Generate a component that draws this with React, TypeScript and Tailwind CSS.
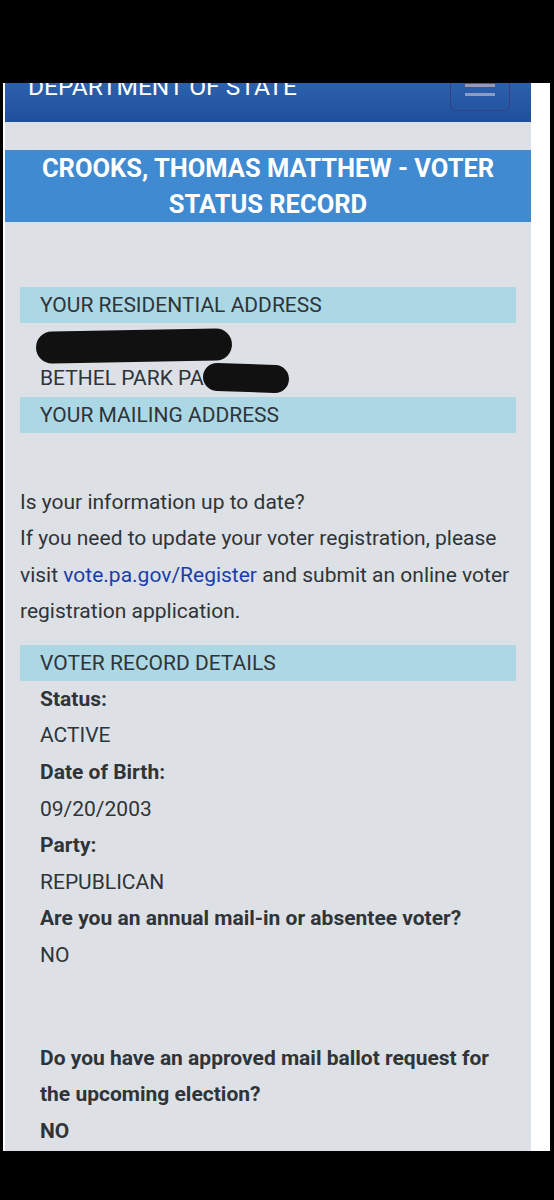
import React from 'react';

const DETAILS = [
  { label: 'Status:', value: 'ACTIVE' },
  { label: 'Date of Birth:', value: '09/20/2003' },
  { label: 'Party:', value: 'REPUBLICAN' },
  { label: 'Are you an annual mail-in or absentee voter?', value: 'NO' },
];

function SectionBar({ children }: { children: React.ReactNode }) {
  return (
    <div className="mx-[15px] h-[36px] bg-[#acd8e6] pl-[20px] text-[21px] leading-[36px] text-[#2f3438]">
      {children}
    </div>
  );
}

// marker scribble that hides part of the address
function Redaction({ w, h, tilt }: { w: number; h: number; tilt: string }) {
  return (
    <svg width={w} height={h} viewBox={`0 0 ${w} ${h}`} className={`inline-block align-middle ${tilt}`}>
      <rect x="1" y="1" width={w - 2} height={h - 2} rx={(h - 2) / 2} fill="#111" />
    </svg>
  );
}

export default function App() {
  return (
    <div className="h-[1200px] w-[554px] overflow-hidden bg-black pt-[83px] font-['Roboto','Liberation_Sans',sans-serif]">
      <div className="ml-[3px] mr-[4px] bg-white pl-[2px] pr-[19px]">
        <div className="h-[1068px] overflow-hidden bg-[#dde1e6]">
          {/* Header */}
          <header className="flex h-[39px] items-start justify-between overflow-hidden bg-gradient-to-b from-[#2c61ae] to-[#1f4f9b] pl-[23px] pr-[21px]">
            <span className="-mt-[8px] text-[24.5px] leading-[24px] text-white">DEPARTMENT OF STATE</span>
            <button className="-mt-[10px] flex h-[38px] w-[60px] flex-col items-center justify-end gap-[6px] rounded-[6px] border-[1.5px] border-[#3b3c85] pb-[14px]">
              <span className="h-[3px] w-[30px] bg-[#8e9cc2]" />
              <span className="h-[3px] w-[30px] bg-[#8e9cc2]" />
              <span className="h-[3px] w-[30px] bg-[#8e9cc2]" />
            </button>
          </header>

          {/* Title */}
          <div className="mt-[28px] bg-[#3f8ad0] text-center text-[25.5px] font-bold leading-[36px] text-white">
            CROOKS, THOMAS MATTHEW - VOTER
            <br />
            STATUS RECORD
          </div>

          <div className="mt-[65px]">
            <SectionBar>YOUR RESIDENTIAL ADDRESS</SectionBar>
            <div className="pl-[35px] text-[21px] leading-[36.5px] text-[#2f3438]">
              <div className="-ml-[5px] h-[37px] pt-[4px]">
                <Redaction w={198} h={34} tilt="-rotate-[1deg]" />
              </div>
              <div className="flex h-[36.5px] items-center">
                <span>BETHEL PARK PA</span>
                <Redaction w={88} h={30} tilt="rotate-[2deg] -ml-[2px]" />
              </div>
            </div>
            <SectionBar>YOUR MAILING ADDRESS</SectionBar>
          </div>

          <div className="mt-[51px] px-[15px] text-[21px] leading-[36.6px] text-[#2f3438]">
            <p>Is your information up to date?</p>
            <p>
              If you need to update your voter registration, please visit{' '}
              <a href="#" className="text-[#1b3dac]">vote.pa.gov/Register</a> and submit an online voter
              registration application.
            </p>
          </div>

          <div className="mt-[15px]">
            <SectionBar>VOTER RECORD DETAILS</SectionBar>
            <dl className="pl-[35px] text-[21px] leading-[36.6px] text-[#2f3438]">
              {DETAILS.map((d) => (
                <div key={d.label}>
                  <dt className="font-bold">{d.label}</dt>
                  <dd>{d.value}</dd>
                </div>
              ))}
              <div className="mt-[66px]">
                <dt className="pr-[30px] font-bold">
                  Do you have an approved mail ballot request for the upcoming election?
                </dt>
                <dd className="font-bold">NO</dd>
              </div>
            </dl>
          </div>
        </div>
      </div>
    </div>
  );
}
